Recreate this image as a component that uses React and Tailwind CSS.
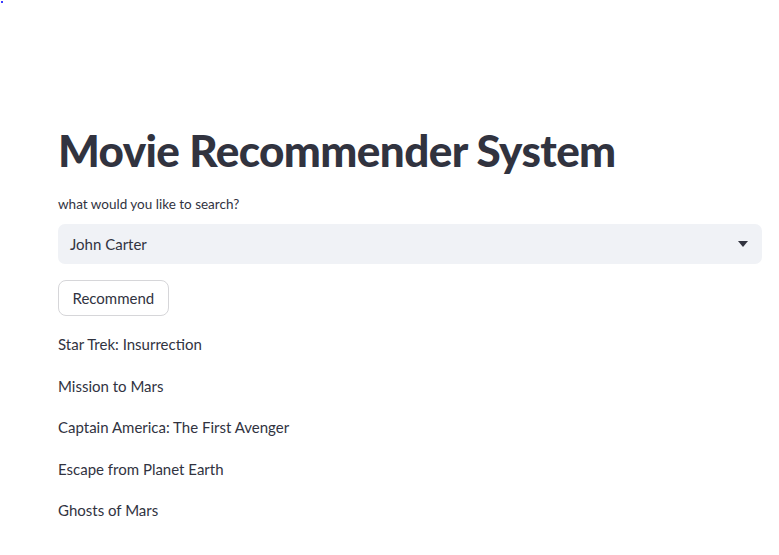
export default function App() {
  const items = [
    "Star Trek: Insurrection",
    "Mission to Mars",
    "Captain America: The First Avenger",
    "Escape from Planet Earth",
    "Ghosts of Mars",
  ];
  return (
    <div className="relative min-h-[555px] w-[779px] bg-white text-[#31333f]" style={{ fontFamily: '"Lato", "Noto Sans", sans-serif' }}>
      <div className="absolute left-[1px] top-[1px] h-[2px] w-[2px] bg-[#3b3bff]" />
      <div className="flex flex-col pl-[58px] pr-[17px] pt-[124px]">
        <h1 className="text-[44px] font-black leading-[52px] tracking-[-0.6px]">Movie Recommender System</h1>
        <div className="mt-[18px] text-[13.5px] leading-[20px]">what would you like to search?</div>
        <div className="mt-[10px] flex h-[40px] items-center justify-between rounded-[7px] bg-[#f0f2f6] pl-[12px] pr-[14px] text-[15px]">
          <span>John Carter</span>
          <svg width="10" height="6" viewBox="0 0 10 6"><path d="M0 0h10L5 6z" fill="#31333f" /></svg>
        </div>
        <div className="mt-[16px]">
          <button className="h-[36px] rounded-[8px] border border-[#d6d6d9] bg-white px-[13.5px] text-[15px]">Recommend</button>
        </div>
        <div className="mt-[16px] flex flex-col gap-[17.5px]">
          {items.map((t) => (
            <div key={t} className="text-[15px] leading-[24px]">{t}</div>
          ))}
        </div>
      </div>
    </div>
  );
}
